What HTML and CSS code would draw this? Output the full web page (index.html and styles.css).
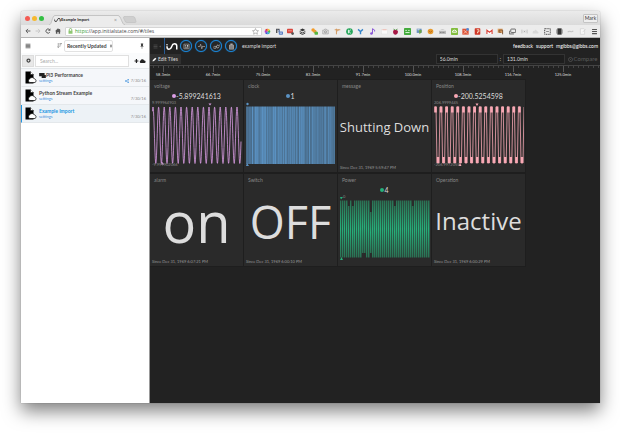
FILE: index.html
```html
<!DOCTYPE html>
<html lang="en">
<head>
<meta charset="utf-8">
<title>Example Import</title>
<link rel="stylesheet" href="styles.css">
</head>
<body>
<div class="window">
  <header class="titlebar">
    <span class="dot red"></span><span class="dot yellow"></span><span class="dot green"></span>
    <div class="tab">
      <svg class="tab-shape" viewBox="0 0 76 10" preserveAspectRatio="none"><path d="M0 10 C3 10 3 .5 6 .5 H69 C72 .5 73 10 76 10" fill="#ececec" stroke="#b5b5b5" stroke-width=".7"/></svg>
      <svg class="tab-icon" viewBox="0 0 24 14"><circle cx="2" cy="4" r="1.600" fill="#222"/><path d="M2 7v1q0 4.500 4 4.500 3.500 0 5-4.500l.8-2Q13 1.500 17 1.500q4.500 0 4.500 4.500v6" fill="none" stroke="#222" stroke-width="3"/></svg>
      <span class="tab-title">Example Import</span><button class="tab-close" aria-label="Close tab">×</button>
    </div>
    <svg class="newtab" viewBox="0 0 14 7"><path d="M1 .5h9q1.500 0 2 1.500l1 3.500q0 1-1 1H4q-1.500 0-2-1.500L.5 2q0-1.500.5-1.500z" fill="#cfcfcf" stroke="#b8b8b8" stroke-width=".5"/></svg>
    <button class="profile">Mark</button>
  </header>

  <nav class="toolbar">
    <button class="tool" aria-label="Back"><svg viewBox="0 0 10 10"><path d="M9 5H2M5 1.500 1.500 5 5 8.500" fill="none" stroke="#555" stroke-width="1.500"/></svg></button>
    <button class="tool" aria-label="Forward"><svg viewBox="0 0 10 10"><path d="M1 5h7M5 1.500 8.500 5 5 8.500" fill="none" stroke="#c4c4c4" stroke-width="1.500"/></svg></button>
    <button class="tool" aria-label="Reload"><svg viewBox="0 0 10 10"><path d="M8 7A3.500 3.500 0 1 1 7.500 2.500" fill="none" stroke="#555" stroke-width="1.600"/><path d="M9 .5v4H5z" fill="#555"/></svg></button>
    <button class="tool" aria-label="Home"><svg viewBox="0 0 10 10"><path d="M5 .5 0 5.500h1.500V9.500H4V6.500h2v3h2.500v-4H10L8.500 4V1.500H7v1z" fill="#555"/></svg></button>
    <label class="address">
      <svg class="lock" viewBox="0 0 10 12"><path d="M2.500 6V3.500a2.500 2.500 0 0 1 5 0V6" fill="none" stroke="#6cab4f" stroke-width="1.500"/><rect x="1" y="5.500" width="8" height="6" fill="#8fc773"/></svg>
      <span class="scheme">https</span><input class="url" type="text" aria-label="Address" value="://app.initialstate.com/#/tiles">
      <svg class="star" viewBox="0 0 10 10"><path d="m5 .8 1.300 2.800 3 .3-2.200 2 .6 3L5 7.400 2.300 8.900l.6-3-2.200-2 3-.3z" fill="#fff" stroke="#888" stroke-width=".8"/></svg>
    </label>
    <div class="extensions">
      <svg viewBox="0 0 10 10"><path d="M5 5V1a4 4 0 0 1 3.500 2z" fill="#f2c12e"/><path d="m5 5 3.500-2a4 4 0 0 1 0 4z" fill="#4cb748"/><path d="m5 5 3.500 2A4 4 0 0 1 5 9z" fill="#2bb5c9"/><path d="M5 5v4a4 4 0 0 1-3.500-2z" fill="#3c59d6"/><path d="M5 5 1.500 7a4 4 0 0 1 0-4z" fill="#b13bcb"/><path d="M5 5 1.500 3A4 4 0 0 1 5 1z" fill="#e4383e"/></svg>
      <svg viewBox="0 0 10 10"><path d="M0 1h5v2H2v4H0z" fill="#555"/><path d="m2 2 4 6M5 2v6" stroke="#687ba0" stroke-width="1.300"/><rect x="4" y="5" width="6" height="4.500" rx="1" fill="#5a7fc4"/><path d="M5.500 7.300h3" stroke="#fff"/></svg>
      <svg viewBox="0 0 10 10"><rect x="0" y="1" width="8.500" height="6.500" rx="1" fill="#d8453c"/><path d="M1.500 4h5.500" stroke="#f4bbb5"/><circle cx="8" cy="8" r="2" fill="#555"/></svg>
      <svg viewBox="0 0 10 10"><path d="m5 .8 4 2-4 2-4-2z" fill="#333"/><path d="m1 5 4 2 4-2M1 7.200l4 2 4-2" fill="none" stroke="#333" stroke-width="1.300"/></svg>
      <svg viewBox="0 0 10 10"><circle cx="3" cy="3" r="2.500" fill="#f39a27"/><circle cx="5.500" cy="5" r="2.500" fill="#e5a038"/><rect x="5" y="5.500" width="5" height="4" rx="1" fill="#55b640"/></svg>
      <svg viewBox="0 0 10 10"><path d="M1 3h2l1-1.500h2L7 3h2v5.500H1z" fill="#ddd" stroke="#999" stroke-width=".8"/><circle cx="5" cy="5.500" r="1.500" fill="none" stroke="#888"/></svg>
      <svg viewBox="0 0 10 10"><path d="M1 2.500h8M3.500 1v8M3.500 5 7 2.500" fill="none" stroke="#d49a60" stroke-width="1.400"/></svg>
      <svg viewBox="0 0 10 10"><circle cx="5" cy="5" r="4.800" fill="#26a65b"/><path d="M3.500 2.500v5M6.800 2.500 4 5l2.800 2.500" fill="none" stroke="#fff" stroke-width="1.200"/></svg>
      <svg viewBox="0 0 10 10"><path d="M1.500 2 5 5l3.500-3M5 5v4" fill="none" stroke="#3484c9" stroke-width="2"/></svg>
      <svg viewBox="0 0 10 10"><path d="M5 8V1l3 2v2" fill="none" stroke="#8957d6" stroke-width="1.400"/><circle cx="3.500" cy="8" r="1.800" fill="#8957d6"/></svg>
      <svg viewBox="0 0 10 10"><rect x="1" y="2" width="8" height="6.500" fill="#fafafa" stroke="#ddd" stroke-width=".5"/><path d="M2 2.500h6" stroke="#f0a394"/></svg>
      <svg viewBox="0 0 10 10"><path d="M2 .8 5 3l3-2.200-1 2.700H3z" fill="#478a37"/><path d="M5 3q4 0 3.500 3T5 9.500 1.500 6 5 3z" fill="#a61744"/></svg>
      <svg viewBox="0 0 10 10"><rect y="0" width="10" height="10" rx="1" fill="#43aa3c"/><path d="M2 3.500h2m2 0h2M2 6.500h6" stroke="#e5ffe1" stroke-width="1.300"/></svg>
      <svg viewBox="0 0 10 10"><rect x="1" y="1" width="7" height="6" fill="#6992bd"/><path d="M4 3h4v3L5 9z" fill="#6da44c"/><path d="M2 2.500h3" stroke="#fff"/></svg>
      <svg viewBox="0 0 10 10"><circle cx="5" cy="5" r="4" fill="#e79b2f"/><path d="m2.500 4 2.500 2 2.500-2" fill="none" stroke="#a65916"/></svg>
      <svg viewBox="0 0 10 10"><path d="M2 3q3-3 6 0z" fill="#ccc"/><rect y="4" width="10" height="4.500" fill="#bbb"/><path d="M1.500 6.300h7" stroke="#666" stroke-dasharray="1.500 .7"/></svg>
      <svg viewBox="0 0 10 10"><rect width="10" height="10" rx="1" fill="#83bd3f"/><path d="M2 6q0-3 3-3t3 3z" fill="none" stroke="#fff" stroke-width="1.300"/></svg>
      <svg viewBox="0 0 10 10"><rect x=".5" y="1" width="9" height="8.500" fill="#dc5235"/><path d="m2.500 3 5 5m0-5-5 5" stroke="#ffe1d2"/><circle cx="8" cy="2" r="2" fill="#528bd6"/></svg>
      <svg viewBox="0 0 10 10"><rect x="1" y=".5" width="8" height="9" rx="1" fill="#cf3728"/><path d="M4 2.500h3v3H5v2" fill="none" stroke="#ffd" stroke-width="1.100"/></svg>
      <svg viewBox="0 0 10 10"><rect x=".5" y="2" width="9" height="6.500" fill="#fff"/><path d="M1.300 8.500V3L5 6l3.700-3v5.500" fill="none" stroke="#d84136" stroke-width="1.600"/></svg>
      <svg viewBox="0 0 10 10"><rect x="1" y="1" width="7" height="6" fill="#dfa061"/><path d="M3 3h5v6M3 3v3h3" fill="none" stroke="#78502e" stroke-width="1.300"/></svg>
      <svg viewBox="0 0 10 10"><rect x="2.500" y="1.500" width="7" height="5" rx="1" fill="none" stroke="#555" stroke-width="1.200"/><path d="M.5 4v4.500H7" fill="none" stroke="#555" stroke-width="1.200"/></svg>
      <svg viewBox="0 0 10 10"><circle cx="5" cy="5" r="1" fill="#aaa"/><path d="M3 3q-1.500 2 0 4m4-4q1.500 2 0 4M1.300 2q-1.500 3 0 6m7.400-6q1.500 3 0 6" fill="none" stroke="#bbb" stroke-width=".8"/></svg>
      <svg viewBox="0 0 10 10"><path d="M1 6q0-2.500 3-2l1-2 3 3q2 1 1 3H1z" fill="#d8d8d8"/></svg>
      <svg viewBox="0 0 10 10"><rect x="1" y="1" width="8" height="8" fill="none" stroke="#444" stroke-width="1.400" stroke-dasharray="1.600 1"/><path d="M3 5h4" stroke="#666"/></svg>
      <svg viewBox="0 0 10 10"><rect x="2" y=".5" width="6" height="9" fill="#333"/><path d="M1 2v6m8-6v6" stroke="#777"/></svg>
      <svg viewBox="0 0 10 10"><path d="M1 6q2-2 4-1t4-1" fill="none" stroke="#c3c3c3" stroke-width="1.500"/></svg>
      <svg viewBox="0 0 10 10"><path d="M2 1h5l1 1v7H2z" fill="#f8f8f8" stroke="#d1d1d1"/><path d="M5 6 9 2" stroke="#ccc"/></svg>
      <svg viewBox="0 0 10 10"><path d="M1.500 2h7m-7 3h7m-7 3h7" stroke="#555" stroke-width="1.500"/></svg>
    </div>
  </nav>

  <div class="app">
    <aside class="sidebar">
      <div class="side-head">
        <button class="ico" aria-label="List"><svg viewBox="0 0 10 10"><path d="M1 2h8M1 4h8M1 6h8M1 8h8" stroke="#444" stroke-width="1.200"/></svg></button>
        <div class="sorter">
          <svg class="sort-ico" viewBox="0 0 10 10"><path d="M2.500 0v9M.5 7l2 2 2-2M5 1h5M5 3.500h3.500M5 6h2" fill="none" stroke="#555"/></svg>
          <span class="select-wrap"><select aria-label="Sort order"><option>Recently Updated</option></select><svg class="updown" viewBox="0 0 6 10"><path d="m3 0 2.500 4h-5zM3 10 .5 6h5z" fill="#333"/></svg></span>
        </div>
        <button class="ico" aria-label="Pin"><svg viewBox="0 0 10 10"><path d="M3 1h4v1H6.500v2.500L8 6H2l1.500-1.500V2H3zM4.600 6h.8v3.500h-.8z" fill="#333"/></svg></button>
      </div>
      <div class="side-search">
        <button class="gear" aria-label="Filter"><svg viewBox="0 0 10 10"><circle cx="5" cy="5" r="3" fill="none" stroke="#444" stroke-width="2.500"/></svg></button>
        <input type="text" aria-label="Search" placeholder="Search...">
        <button class="add" aria-label="Add bucket"><svg viewBox="0 0 22 10"><path d="M1 5h7M4.500 1.500v7" stroke="#222" stroke-width="2.200"/><path d="M12 8.500a2.500 2.500 0 0 1 0-4.500 3.500 3.500 0 0 1 6.500 0 2.300 2.300 0 0 1 1 4.500z" fill="#222"/></svg></button>
      </div>
      <ul class="buckets" id="buckets"></ul>
    </aside>

    <main class="main">
      <div class="topbar">
        <button class="menu" aria-label="Menu"><svg viewBox="0 0 18 10"><path d="M1 2h8M1 5h8M1 8h8" stroke="#666"/><path d="m15 3-2 2 2 2z" fill="#777"/></svg></button>
        <svg class="brand" viewBox="0 0 24 14"><circle cx="2" cy="3.500" r="1.500" fill="#fff"/><path d="M2 6.500v1.500q0 4.500 4 4.500 3.500 0 5-4.500l.8-2Q13 1.500 17 1.500q4.500 0 4.500 4.500v7" fill="none" stroke="#fff" stroke-width="3"/></svg>
        <button class="round" aria-label="Tiles"><svg viewBox="0 0 12 12"><path d="M1.500 2h9v8h-9z" fill="none" stroke="#bbb"/><path d="M3 4h2v2H3zm3.500-.5h2.500v3H6.500zM3 7.500h6V9H3z" fill="#ccc"/></svg></button>
        <button class="round" aria-label="Waves"><svg viewBox="0 0 12 12"><path d="M0 6h3l1.500-4 2 8L8 5l1 1h3" fill="none" stroke="#aaa" stroke-width="1.200"/></svg></button>
        <button class="round" aria-label="Lines"><svg viewBox="0 0 12 12"><path d="m0 8 3-3 2 2 3-4 1 2 3-2M1 9h4l1-3 2 3 3-3" fill="none" stroke="#bbb" stroke-width="1.200"/></svg></button>
        <button class="round" aria-label="Source"><svg viewBox="0 0 12 12"><path d="M2 3h8v8H2zM4 1h4v2H4z" fill="#aaa"/><path d="M3.500 5h5m-5 2h5m-5 2h5" stroke="#555"/></svg></button>
        <h1>example import</h1>
        <div class="links"><a href="#feedback">feedback</a><a href="#support">support</a><a href="#account">mgibbs@gibbs.com</a></div>
      </div>
      <div class="editbar">
        <button class="edit"><svg viewBox="0 0 10 10"><path d="m1 9 .8-3L6.500 1.300l2.200 2.200L4 8.200z" fill="#fff"/></svg>Edit Tiles</button>
        <div class="range"><input type="text" aria-label="Range start" value="56.0min"><span>:</span><input type="text" aria-label="Range end" value="131.0min"><button class="compare"><svg viewBox="0 0 10 10"><circle cx="5" cy="5" r="4" fill="none" stroke="#555" stroke-width="1.500"/><circle cx="5" cy="5" r="1" fill="#555"/></svg>Compare</button></div>
      </div>
      <div class="ruler">
        <span>58.3min</span><span>66.7min</span><span>75.0min</span><span>83.3min</span><span>91.7min</span><span>100.0min</span><span>108.3min</span><span>116.7min</span><span>125.0min</span>
      </div>
      <section class="tiles">
        <article class="tile voltage"><h2>voltage</h2><p class="value">-5.899241613</p>
          <svg class="chart" viewBox="0 0 90 66"><path data-wave="sine" class="wave"/><path d="M56.500 3.500h3l-1.500 2zM9 64.500h3L10.500 62z" class="mark"/><text x="0" y="4">9.999964903</text><text x="0" y="65.500">-9.999902066</text></svg></article>
        <article class="tile clock"><h2>clock</h2><p class="value">1</p>
          <svg class="chart" viewBox="0 0 90 66"><g data-bars="clock"></g><circle cx="1.500" cy="4" r="1.200" class="mark"/><path d="M0 66h3l-2-3z" class="mark"/></svg></article>
        <article class="tile"><h2>message</h2><p class="word w13">Shutting Down</p><small>Since Dec 31, 1969 5:59:47 PM</small></article>
        <article class="tile position"><h2>Position</h2><p class="value">-200.5254598</p>
          <svg class="chart" viewBox="0 0 90 66"><path data-wave="square" class="wave"/><g data-caps></g><path d="M41.500 3.500h3l-1.500 2.500zM24.500 66h3L26 63z" class="mark"/><text x="0" y="4">206.9999445</text><text x="0" y="66">-206.9972055</text></svg></article>
        <article class="tile"><h2>alarm</h2><p class="word w56">on</p><small>Since Dec 31, 1969 6:07:21 PM</small></article>
        <article class="tile"><h2>Switch</h2><p class="word w45">OFF</p><small>Since Dec 31, 1969 6:00:10 PM</small></article>
        <article class="tile power"><h2>Power</h2><p class="value">4</p>
          <svg class="chart" viewBox="0 0 90 66"><defs><linearGradient id="glow" x2="0" y2="1"><stop offset="0" stop-color="#2b7053"/><stop offset=".5" stop-color="#26b07a"/><stop offset="1" stop-color="#2b7053"/></linearGradient></defs><g data-bars="power"></g><path d="M0 3h3L1 5.500zM0 66h3l-1.500-3z" class="mark"/><text x="3" y="4">0</text></svg></article>
        <article class="tile"><h2>Operation</h2><p class="word w24">Inactive</p><small>Since Dec 31, 1969 6:00:29 PM</small></article>
      </section>
    </main>
  </div>
</div>
<script src="app.js"></script>
</body>
</html>
```
FILE: app.js
```js
const buckets = [
  { name: 'Pi3 Performance', shared: true, flag: true },
  { name: 'Python Stream Example' },
  { name: 'Example Import', current: true }
];
const share = '<svg class="share" viewBox="0 0 10 10"><path d="M8 2 2 5l6 3" fill="none" stroke="#3b8fdc" stroke-width="1.2"/><g fill="#3b8fdc"><circle cx="8" cy="2" r="1.7"/><circle cx="2" cy="5" r="1.7"/><circle cx="8" cy="8" r="1.7"/></g></svg>';
const flag = '<svg class="flag" viewBox="0 0 16 12"><path d="M0 0h13v5h3v7H6V8H0z" fill="#222"/></svg>';
const file = '<svg class="file" viewBox="0 0 24 26"><path d="M1 1h10l6 6v18H1z" fill="#000"/><path d="M11 1v6h6" fill="#fff" stroke="#000"/><path d="M9.500 23a4 4 0 0 1 0-7.500 5.500 5.500 0 0 1 9.500.5 3.700 3.700 0 0 1 1 7z" fill="#fff" stroke="#000" stroke-width="1.4"/></svg>';
document.getElementById('buckets').innerHTML = buckets.map(b =>
  `<li class="${b.current ? 'current' : ''}">${file}<div class="names"><b>${b.flag ? flag : ''}${b.name}</b><a href="#settings">settings</a></div><span class="date">${b.shared ? share : ''}7/30/16</span></li>`).join('');

const TOP = 7, BOTTOM = 63.5, STEP = 5.6;

// Sine trace: sixteen cycles starting on a crest.
let sine = '';
for (let x = 0; x <= 88.5; x += 0.25) {
  const y = (TOP + BOTTOM) / 2 - (BOTTOM - TOP) / 2 * Math.cos((x - 0.5) / STEP * 2 * Math.PI);
  sine += (sine ? 'L' : 'M') + (x + 0.5) + ' ' + y.toFixed(2);
}
document.querySelector('[data-wave=sine]').setAttribute('d', sine);

// Square trace: steep edges between noisy high and low plateaus.
let square = 'M1 7', caps = '';
for (let i = 0; i < 16; i++) {
  const x = i * STEP;
  square += `L${x + 2} 7L${x + 3} 63H${x + 5}L${x + 6} 7`;
  caps += `<rect x="${x + 0.2}" y="6.500" width="2.600" height="6"/>`;
  caps += `<rect x="${x + 2.800}" y="57" width="2.400" height="6"/>`;
}
document.querySelector('[data-wave=square]').setAttribute('d', square);
document.querySelector('[data-caps]').innerHTML = caps;

const noise = i => { const v = Math.sin(i * 78.233) * 43758.5453; return v - Math.floor(v); };
let clock = '', power = '';
for (let i = 0; i < 89; i++) {
  const o = 0.62 + noise(i) * 0.38;
  clock += `<rect x="${i}" y="6.500" width="1" height="57.500" fill="#5b93c4" opacity="${o.toFixed(2)}"/>`;
}
for (let i = 0; i < 45; i++) {
  const top = [4, 6, 27, 36].includes(i) ? 12 : i === 15 ? 18 : 6.5;
  const bottom = [11, 12, 15].includes(i) ? 59 : 63.5;
  power += `<rect x="${i * 2}" y="${top}" width="1.300" height="${bottom - top}" fill="url(#glow)"/>`;
  power += `<rect x="${i * 2 + 1.3}" y="${top}" width=".7" height="${bottom - top}" fill="url(#glow)" opacity="${(0.1 + noise(i) * 0.4).toFixed(2)}"/>`;
}
document.querySelector('[data-bars=clock]').innerHTML = clock;
document.querySelector('[data-bars=power]').innerHTML = power;
```
FILE: styles.css
```css
* { box-sizing: border-box; }
body {
  margin: 0;
  min-height: 100vh;
  display: flex;
  padding: 11px 20px 30px 21px;
  background: #fff;
  font: 5px/6px Lato, sans-serif;
  color: #444;
}
svg { display: block; flex: none; }
button, input, select {
  margin: 0;
  padding: 0;
  border: 0;
  background: none;
  color: inherit;
  font: inherit;
  min-width: 0;
}
a { text-decoration: none; color: inherit; }
h1, h2, p, ul { margin: 0; padding: 0; font: inherit; }

.window {
  flex: 1;
  min-width: 0;
  display: flex;
  flex-direction: column;
  border-radius: 2px 2px 0 0;
  box-shadow: 0 8px 18px rgba(0, 0, 0, .5), 0 0 1px rgba(0, 0, 0, .5);
}
.titlebar {
  height: 14px;
  display: flex;
  align-items: center;
  padding: 0 2px 0 4px;
  background: linear-gradient(#ebebeb, #dadada);
  border-radius: 2px 2px 0 0;
}
.dot { width: 5px; height: 5px; border-radius: 50%; margin-right: 2px; }
.red { background: #f45b53; }
.yellow { background: #f6b92f; }
.green { background: #33bf43; }
.tab {
  position: relative;
  align-self: flex-end;
  width: 76px;
  height: 10px;
  margin-left: 3px;
  padding: 0 8px 0 5px;
  display: flex;
  align-items: center;
  color: #222;
}
.tab-shape { position: absolute; inset: 0; width: 100%; height: 100%; }
.tab-icon, .tab-title, .tab-close { position: relative; }
.tab-icon { width: 7px; height: 4px; }
.tab-title { font-size: 4px; font-weight: 700; }
.tab-close { margin-left: auto; color: #888; }
.newtab { width: 14px; height: 7px; margin: 3px 0 0 -2px; }
.profile {
  width: 15px;
  height: 9px;
  margin-left: auto;
  border: 1px solid #c4c4c4;
  border-radius: 1px;
  background: #eee;
  color: #333;
}

.toolbar {
  height: 13px;
  display: flex;
  align-items: center;
  background: #ececec;
  border-bottom: 1px solid #b5b5b5;
  padding-left: 2px;
}
.tool { width: 10px; flex: none; }
.tool svg { width: 6px; height: 6px; margin: auto; }
.address {
  flex: 193;
  min-width: 0;
  height: 9px;
  margin: 0 0 0 2px;
  padding: 0 2px;
  display: flex;
  align-items: center;
  background: #fff;
  border: 1px solid #d6d6d6;
  border-radius: 1px;
  font-family: "Open Sans", sans-serif;
}
.lock { width: 5px; height: 6px; margin-right: 2px; }
.scheme { color: #2f9e2f; }
.url { flex: 1; color: #444; }
.star { width: 7px; height: 7px; }
.extensions {
  flex: 342;
  display: grid;
  grid-template-columns: repeat(29, 1fr);
  justify-items: center;
}
.extensions svg { width: 7px; height: 7px; }

.app { flex: 1; display: flex; }
.sidebar { width: 129px; flex: none; background: #fff; border-right: 1px solid #999; }
.side-head { height: 15px; display: flex; align-items: center; justify-content: space-between; padding: 0 3px; }
.ico { width: 8px; }
.ico svg { width: 6px; height: 6px; margin: auto; }
.sorter { display: flex; align-items: center; gap: 2px; }
.sort-ico { width: 5px; height: 5px; }
.select-wrap { position: relative; }
select {
  appearance: none;
  width: 49px;
  height: 12px;
  padding-left: 2px;
  border: 1px solid #e2e2e2;
  border-radius: 2px;
  font-weight: 700;
}
.updown { position: absolute; right: 1px; top: 4px; width: 2px; height: 4px; }
.side-search { height: 15px; display: flex; align-items: center; padding: 0 3px 0 1px; gap: 1px; background: #fafbfc; }
.gear { width: 12px; height: 12px; background: #e8e8e8; border: 1px solid #ddd; }
.gear svg { width: 5px; height: 5px; margin: auto; }
.side-search input { flex: 1; height: 12px; padding: 0 4px; background: #fff; border: 1px solid #e0e0e0; }
.side-search input::placeholder { color: #aaa; opacity: 1; }
.add { margin-left: 4px; }
.add svg { width: 12px; height: 6px; }
.buckets { list-style: none; border-top: 1px solid #e4e8eb; }
.buckets li {
  height: 18px;
  display: flex;
  align-items: center;
  padding: 0 3px;
  border-left: 1px solid transparent;
  border-bottom: 1px solid #e4e8eb;
  background: #f5f7fa;
}
.buckets .current { border-left-color: #2196e3; background: #edf2f6; }
.file { width: 12px; height: 13px; margin-right: 2px; }
.names { flex: 1; }
.names b, .names a { display: flex; align-items: center; }
.names b { color: #444; font-weight: 700; }
.names a { color: #3b8fdc; font-size: 4px; line-height: 5px; }
.buckets .current b { color: #2196e3; }
.flag { width: 7px; height: 5px; }
.date { display: flex; align-items: center; gap: 2px; align-self: flex-end; padding-bottom: 3px; font-size: 4px; line-height: 5px; color: #888; }
.share { width: 4px; height: 4px; }

.main { flex: 1; min-width: 0; background: #222; color: #ddd; overflow: hidden; }
.topbar { height: 16px; display: flex; align-items: center; padding-right: 2px; }
.menu { width: 15px; height: 16px; border-right: 1px solid #285b94; }
.menu svg { width: 9px; height: 5px; margin: auto; }
.brand { width: 12px; height: 7px; margin: 0 2px 0 1px; }
.round {
  width: 12px;
  height: 12px;
  margin-right: 3px;
  border: 1px solid #1b86d8;
  border-radius: 50%;
  background: #262626;
  box-shadow: 0 0 1px #1b86d8;
}
.round svg { width: 7px; height: 7px; margin: auto; }
h1 { margin-left: 2px; font-weight: 400; }
.links { margin-left: auto; display: flex; gap: 3px; color: #fff; }
.editbar { height: 10px; display: flex; align-items: center; justify-content: space-between; }
.edit { height: 10px; padding: 0 3px 0 2px; display: flex; align-items: center; gap: 1px; background: #303030; }
.edit svg { width: 5px; height: 5px; }
.range { display: flex; align-items: center; gap: 2px; padding-right: 2px; }
.range input { width: 62px; height: 10px; padding: 0 3px; border: 1px solid #333; background: #1e1e1e; }
.compare { width: 31px; display: flex; align-items: center; justify-content: center; color: #5c5c5c; gap: 1px; font-size: 6px; }
.compare svg { width: 5px; height: 5px; }
.ruler {
  height: 14px;
  margin-top: 1px;
  padding-top: 6px;
  display: flex;
  border-top: 1px solid #444;
  background:
    repeating-linear-gradient(90deg, #555 0 1px, transparent 1px 50px) 13px 0 / 100% 6px no-repeat,
    repeating-linear-gradient(90deg, #444 0 1px, transparent 1px 5px) 3px 0 / 100% 2px no-repeat;
  font-size: 4px;
  line-height: 5px;
}
.ruler span { width: 50px; flex: none; text-align: center; }
.ruler span:first-child { margin-left: -12px; }

.tiles { display: grid; grid-template-columns: repeat(4, 94px); grid-auto-rows: 94px; }
.tile {
  position: relative;
  display: flex;
  flex-direction: column;
  padding: 3px 2px 2px;
  background: #2a2a2a;
  border: solid #1e1e1e;
  border-width: 1px 1px 1px 0;
}
.tile h2 { padding-left: 2px; color: #888; }
.value { display: flex; align-items: center; justify-content: center; height: 8px; margin-top: 3px; font-size: 7px; line-height: 8px; }
.value::before { content: ""; width: 4px; height: 4px; border-radius: 50%; background: var(--tone); }
.chart { width: 90px; height: 66px; }
.chart text { font-size: 4px; fill: #888; }
.wave { fill: none; stroke: var(--tone); stroke-width: 1; stroke-opacity: .8; }
.mark, [data-caps] { fill: var(--tone); }
.voltage { --tone: #dc9ee6; }
.clock { --tone: #5b93c4; }
.position { --tone: #f8a8b4; }
.power { --tone: #26b07a; }
.word { flex: 1; display: flex; align-items: center; justify-content: center; white-space: nowrap; font-family: "Open Sans", "Noto Sans", sans-serif; font-weight: 500; color: #ddd; line-height: 1; }
.w13 { font-size: 13px; }
.w24 { font-size: 24px; }
.w45 { font-size: 45px; }
.w56 { font-size: 56px; }
.tile small { font-size: 4px; line-height: 5px; color: #999; }
```
